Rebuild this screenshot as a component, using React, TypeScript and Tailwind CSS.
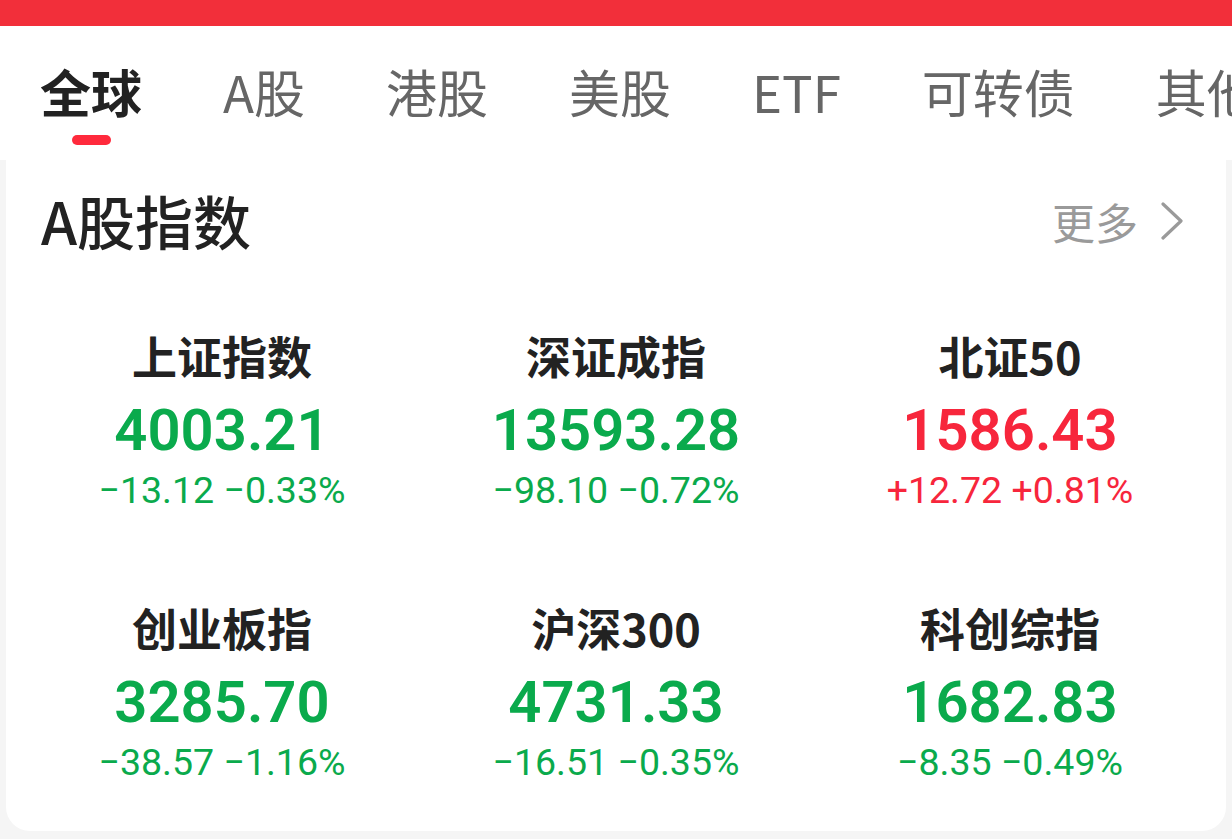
import React from "react";

const tabs = ["全球", "A股", "港股", "美股", "ETF", "可转债", "其他"];

type Item = { name: string; value: string; change: string; pct: string; up: boolean };

const items: Item[] = [
  { name: "上证指数", value: "4003.21", change: "−13.12", pct: "−0.33%", up: false },
  { name: "深证成指", value: "13593.28", change: "−98.10", pct: "−0.72%", up: false },
  { name: "北证50", value: "1586.43", change: "+12.72", pct: "+0.81%", up: true },
  { name: "创业板指", value: "3285.70", change: "−38.57", pct: "−1.16%", up: false },
  { name: "沪深300", value: "4731.33", change: "−16.51", pct: "−0.35%", up: false },
  { name: "科创综指", value: "1682.83", change: "−8.35", pct: "−0.49%", up: false },
];

const cjk = { fontFamily: '"Noto Sans CJK SC", "Noto Sans", sans-serif' };
const num = { fontFamily: 'Roboto, "Noto Sans CJK SC", sans-serif' };

export default function App() {
  return (
    <div className="w-[1232px] h-[839px] overflow-hidden bg-[#f5f5f5]" style={cjk}>
      <div className="h-[26px] bg-[#f22f3a]" />
      <div className="h-[134px] bg-white overflow-hidden">
        <div className="flex gap-[81px] pl-[40px] pt-[40px] whitespace-nowrap">
          {tabs.map((t, i) => (
            <div key={t} className="flex flex-col items-center shrink-0">
              <div
                className={
                  i === 0
                    ? "text-[51px] leading-[50px] font-bold text-[#222222]"
                    : "text-[51px] leading-[50px] font-normal text-[#666666]"
                }
              >
                {t}
              </div>
              {i === 0 && <div className="mt-[19px] h-[10px] w-[39px] rounded-full bg-[#ff2a3c]" />}
            </div>
          ))}
        </div>
      </div>
      <div className="px-[6px]">
        <div className="bg-white rounded-b-[24px] pb-[50px]">
          <div className="flex items-center justify-between pl-[35px] pr-[42px] pt-[32px]">
            <div className="text-[58px] leading-[57px] font-medium text-[#222222]">A股指数</div>
            <div className="flex items-center gap-[22px] text-[#9a9a9a]">
              <span className="text-[43px] leading-[44px]">更多</span>
              <svg width="24" height="38" viewBox="0 0 24 38" fill="none">
                <path d="M3 2 L21 19 L3 36" stroke="#9a9a9a" strokeWidth="3.2" strokeLinecap="round" strokeLinejoin="round" />
              </svg>
            </div>
          </div>
          <div className="grid grid-cols-3 px-[19px] pt-[84px] gap-y-[96px]">
            {items.map((it) => {
              const color = it.up ? "text-[#f7263c]" : "text-[#0aaa4c]";
              return (
                <div key={it.name} className="flex flex-col items-center">
                  <div className="text-[45px] leading-[45px] font-bold text-[#222222]" style={cjk}>
                    {it.name}
                  </div>
                  <div className={`mt-[23px] text-[58px] leading-[58px] font-semibold ${color}`} style={num}>
                    {it.value}
                  </div>
                  <div className={`mt-[13px] text-[37.5px] leading-[37px] font-normal whitespace-nowrap ${color}`} style={num}>
                    {it.change} {it.pct}
                  </div>
                </div>
              );
            })}
          </div>
        </div>
      </div>
    </div>
  );
}
